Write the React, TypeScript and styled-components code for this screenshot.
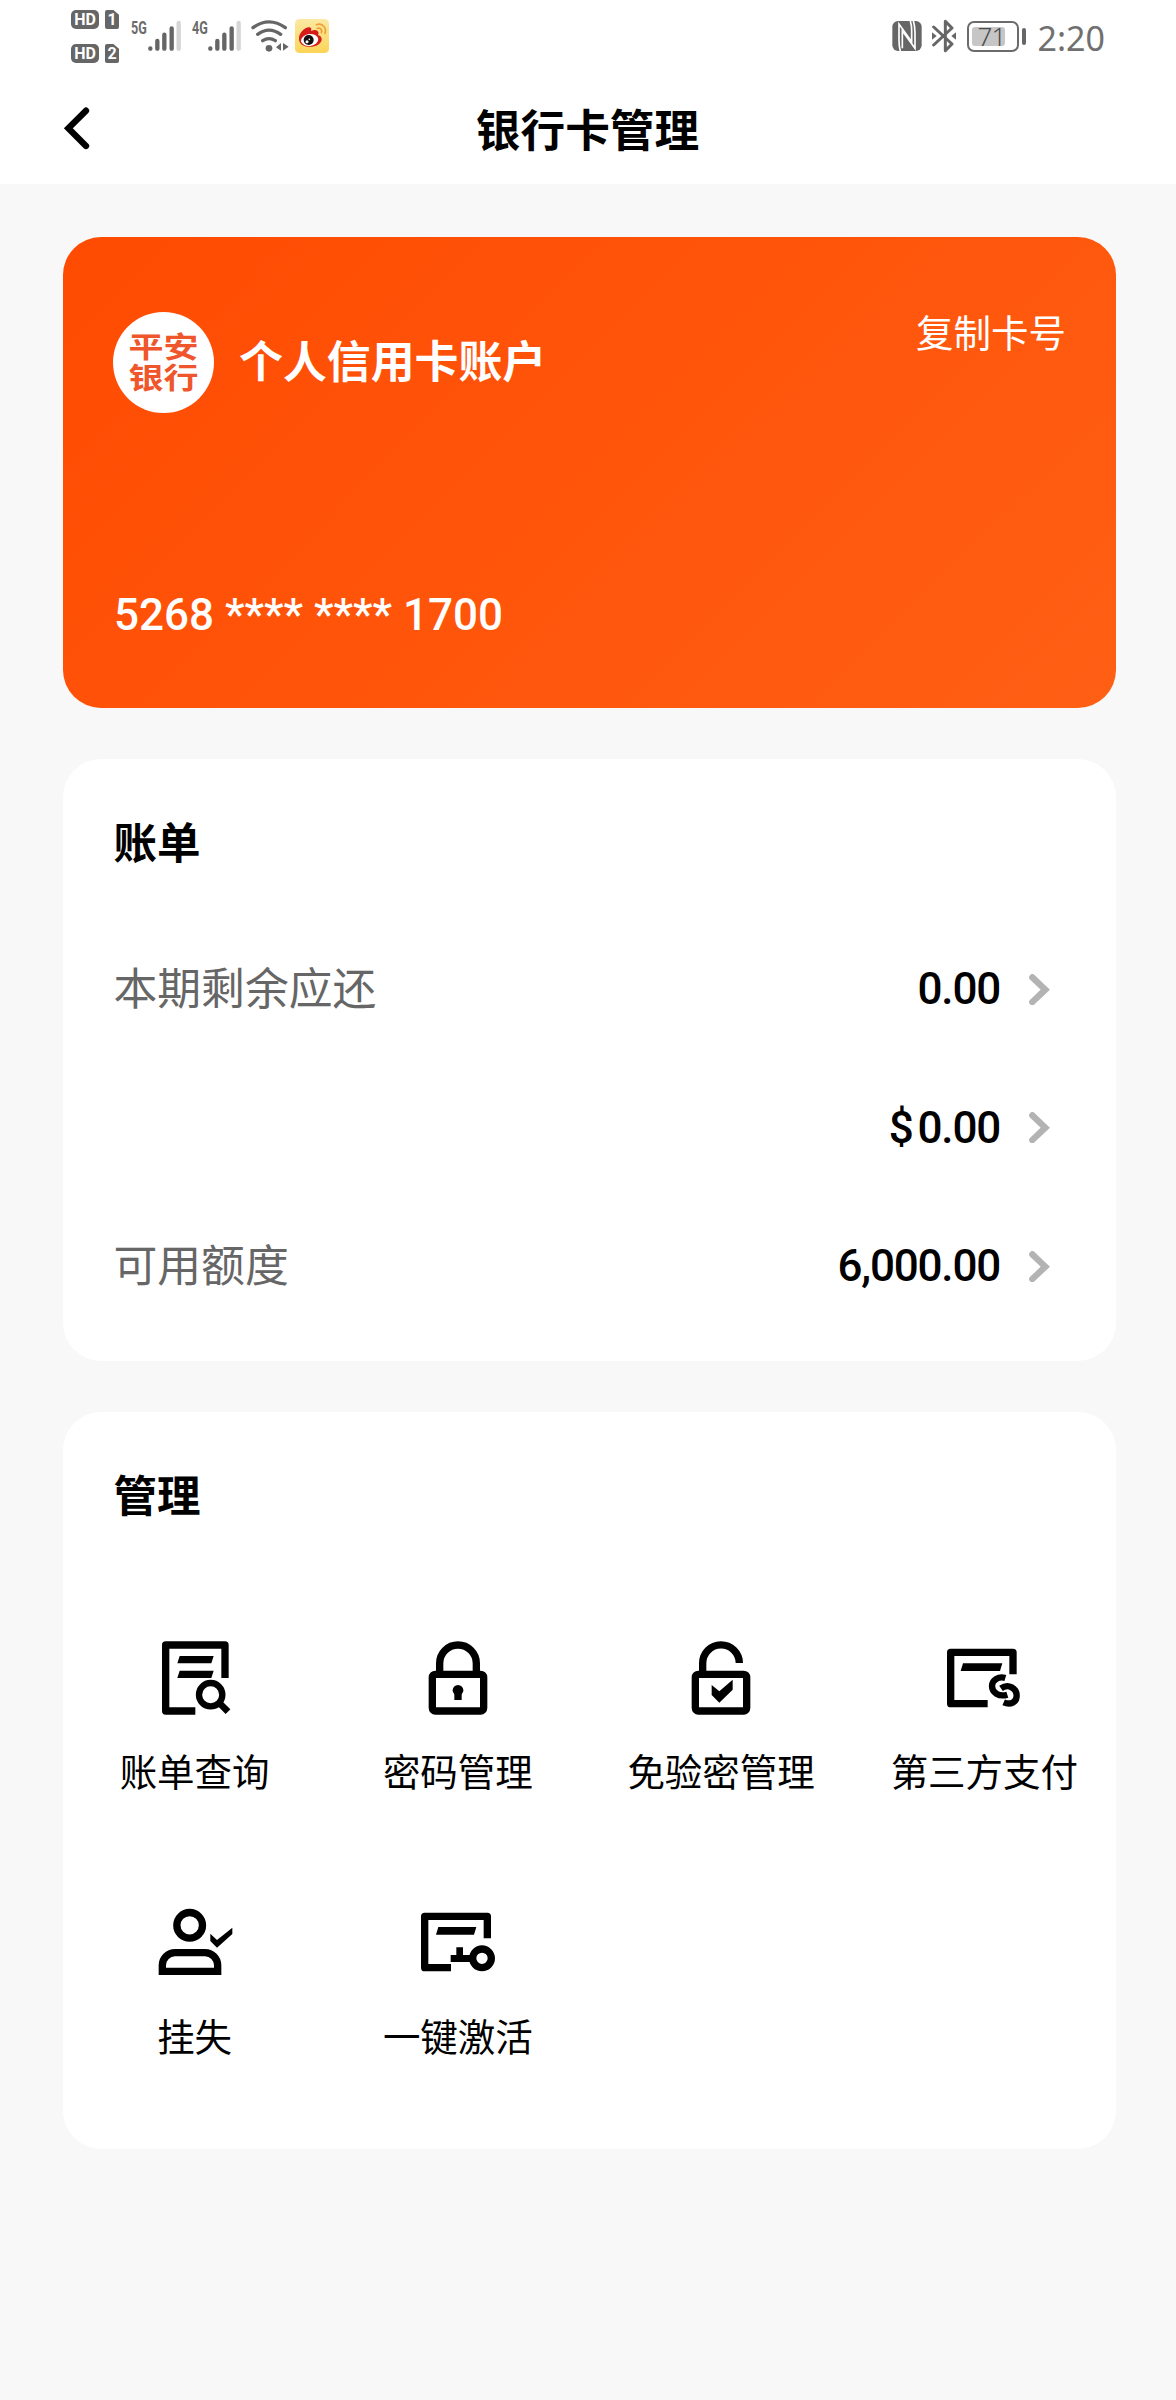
import React from "react";
import styled, { createGlobalStyle } from "styled-components";

const GlobalStyle = createGlobalStyle`
  * { box-sizing: border-box; }
  body {
    margin: 0;
    background: #f8f8f8;
    font-family: Roboto, "Noto Sans CJK SC", sans-serif;
    color: #000;
  }
  svg { display: block; }
`;

const Page = styled.div`
  width: 1176px;
  height: 2400px;
  background: #f8f8f8;
  overflow: hidden;
`;

const Top = styled.header`
  height: 184px;
  background: #fff;
`;

const StatusBar = styled.div`
  display: flex;
  align-items: flex-start;
  justify-content: space-between;
  height: 76px;
  padding: 0 71px;
`;

const StatusGroup = styled.div`
  display: flex;
  align-items: flex-start;
`;

const Glyph = styled.svg<{ $ml?: number; $mt: number }>`
  flex: none;
  margin-left: ${(p) => p.$ml ?? 0}px;
  margin-top: ${(p) => p.$mt}px;
`;

const Badges = styled.div`
  display: grid;
  grid-template-columns: 28px 14px;
  gap: 15px 6px;
  margin-top: 10px;
`;

const Badge = styled.span<{ $sim?: boolean }>`
  height: 19px;
  border-radius: ${(p) => (p.$sim ? "2px" : "5px")};
  background: #666;
  color: #fff;
  font: 700 16px/20px Roboto, sans-serif;
  text-align: center;
  ${(p) => p.$sim && "clip-path: polygon(0 0, 60% 0, 100% 25%, 100% 100%, 0 100%);"}
`;

const NetLabel = styled.span<{ $ml: number }>`
  width: 17px;
  margin: 20px 0 0 ${(p) => p.$ml}px;
  font: 700 18px/16px Roboto, sans-serif;
  color: #6b6b6b;
  transform: scaleX(0.7);
  transform-origin: left;
`;

const Battery = styled.div`
  display: flex;
  align-items: center;
  margin: 21px 0 0 11px;
  &::after {
    content: "";
    width: 4px;
    height: 17px;
    margin-left: 3px;
    border-radius: 2px;
    background: #666;
  }
`;

const BatteryBody = styled.div`
  width: 52px;
  height: 31px;
  padding: 4px 3px;
  border: 2.5px solid #6b6b6b;
  border-radius: 7px;
`;

const BatteryFill = styled.div`
  width: 33px;
  height: 19px;
  padding-left: 6px;
  border-radius: 3px;
  background: #c6c6c6;
  color: #4c4c4c;
  font: 300 26px/19px "Noto Sans", sans-serif;
  letter-spacing: -1px;
  white-space: nowrap;
`;

const Clock = styled.span`
  margin-left: 12px;
  margin-top: 14px;
  font: 400 34px/48px "Noto Sans", sans-serif;
  color: #707070;
`;

const NavBar = styled.div`
  display: grid;
  grid-template-columns: 63px 1fr 63px;
  align-items: center;
  height: 108px;
`;

const BackButton = styled.button`
  padding: 0 0 4px 63px;
  border: 0;
  background: none;
`;

const PageTitle = styled.h1`
  margin: 0;
  padding: 5px 1px 0 0;
  text-align: center;
  font-size: 44.7px;
  line-height: 103px;
  font-weight: 700;
`;

const Content = styled.main`
  display: flex;
  flex-direction: column;
  gap: 51px;
  padding: 53px 60px 0 63px;
`;

const BankCard = styled.section`
  display: flex;
  flex-direction: column;
  justify-content: space-between;
  height: 471px;
  padding: 75px 50px 63px;
  border-radius: 38px;
  background: linear-gradient(135deg, #ff4b02 0%, #ff5f14 100%);
  color: #fff;
`;

const CardHead = styled.div`
  display: flex;
  align-items: flex-start;
`;

const BankLogo = styled.div`
  display: flex;
  align-items: center;
  justify-content: center;
  width: 101px;
  height: 101px;
  border-radius: 50%;
  background: #fff;
`;

const LogoText = styled.span`
  width: 72px;
  padding-top: 3px;
  font-size: 35px;
  line-height: 37px;
  font-weight: 700;
  text-align: center;
  color: #f0562c;
  transform: scaleY(0.83);
`;

const AccountName = styled.h2`
  margin: 0 auto 0 25px;
  font-size: 43.9px;
  line-height: 102px;
  font-weight: 700;
`;

const CopyButton = styled.button`
  padding: 1px 0 0 0;
  border: 0;
  background: none;
  color: #fff;
  font: inherit;
  font-size: 37.5px;
  line-height: 42px;
`;

const CardNumber = styled.div`
  padding-left: 1px;
  font-size: 44px;
  line-height: 60px;
  font-weight: 500;
`;

const Panel = styled.section<{ $height: number }>`
  height: ${(p) => p.$height}px;
  border-radius: 38px;
  background: #fff;
`;

const PanelTitle = styled.h2`
  height: 161px;
  margin: 0;
  padding-left: 50.5px;
  font-size: 43.5px;
  line-height: 171px;
  font-weight: 700;
`;

const BillRow = styled.div`
  display: flex;
  align-items: center;
  height: 138.5px;
  padding: 0 66px 0 50.5px;
`;

const BillLabel = styled.span`
  flex: 1;
  padding-bottom: 6px;
  font-size: 43.8px;
  color: #666;
`;

const Amount = styled.span`
  margin-right: 29px;
  font-size: 44px;
  line-height: 60px;
  font-weight: 500;
  letter-spacing: -1.2px;
`;

const Currency = styled.span`
  margin-right: 5px;
`;

const ActionGrid = styled.div`
  display: grid;
  grid-template-columns: repeat(4, 1fr);
  grid-auto-rows: 265px;
`;

const Action = styled.button`
  display: flex;
  flex-direction: column;
  align-items: center;
  padding: 61px 0 0;
  border: 0;
  background: none;
  color: #000;
  font: inherit;
  font-size: 37.5px;
  line-height: 56px;
  white-space: nowrap;
`;

const ActionIcon = styled.svg`
  width: 88px;
  height: 88px;
  margin-bottom: 23px;
`;

const line = { fill: "none", stroke: "#000", strokeWidth: 22 } as const;

const StatementIcon = () => (
  <>
    <path d="M222 132V33H44V231H133" {...line} strokeLinejoin="round" />
    <path d="M86 66H188L181 88H79ZM86 110H188L181 132H79Z" />
    <circle cx="179" cy="182" r="35" {...line} strokeWidth={19} />
    <path d="M205 207L231 233" {...line} strokeWidth={20} />
  </>
);

const LockBody = () => (
  <path
    fillRule="evenodd"
    d="M64 110H200A20 20 0 0 1 220 130V222A20 20 0 0 1 200 242H64A20 20 0 0 1 44 222V130A20 20 0 0 1 64 110ZM66 132V220H198V132Z"
  />
);

const PasswordIcon = () => (
  <>
    <LockBody />
    <path d="M77 121V88A55 55 0 0 1 187 88V121" {...line} />
    <circle cx="132" cy="169" r="16" />
    <path d="M121 175H143V198H121Z" />
  </>
);

const UnlockIcon = () => (
  <>
    <LockBody />
    <path d="M77 121V88A55 55 0 0 1 187 87" {...line} />
    <path d="M104 153L127 172L167 137V167L127 206L104 183Z" />
  </>
);

const ThirdPartyIcon = () => (
  <>
    <path d="M219 121V55H32V209H143" {...line} strokeLinejoin="round" />
    <path d="M69 88H187L180 111H62Z" />
    <path
      d="M196 132C176 126 156 138 156 156C156 175 176 190 202 182M183 163C206 147 230 164 230 185C230 205 212 214 191 205"
      {...line}
      strokeWidth={19}
    />
  </>
);

const LossIcon = () => (
  <>
    <circle cx="116" cy="79" r="38.5" {...line} />
    <path d="M34 217V199A38 38 0 0 1 72 161H162A38 38 0 0 1 200 199V217Z" {...line} />
    <path d="M178 104L198 123L244 86V105L198 146L178 126Z" />
  </>
);

const ActivateIcon = () => (
  <>
    <path d="M220 118V52H32V206H111" {...line} strokeLinejoin="round" />
    <path d="M73 84H187L180 107H66Z" />
    <circle cx="204" cy="178" r="28" {...line} />
    <path d="M110 168H127V145H147V168H170V189H110Z" />
  </>
);

const Signal = ({ ml }: { ml: number }) => (
  <Glyph $ml={ml} $mt={20} width="33" height="32" viewBox="0 0 99 96" fill="none" stroke="#666" strokeWidth="13" strokeLinecap="round">
    <path d="M7 85V86M28 63V86M49 44V86M71 25V86" />
    <path d="M92 9V86" stroke="#d5d5d5" />
  </Glyph>
);

const RowArrow = () => (
  <svg width="21" height="31" viewBox="0 0 63 93" fill="none" stroke="#b3b3b3" strokeWidth="19" strokeLinecap="round">
    <path d="M10 10L49 47L10 84" />
  </svg>
);

const bills = [
  { label: "本期剩余应还", currency: "", value: "0.00" },
  { label: "", currency: "$", value: "0.00" },
  { label: "可用额度", currency: "", value: "6,000.00" },
];

const actions = [
  { label: "账单查询", Icon: StatementIcon },
  { label: "密码管理", Icon: PasswordIcon },
  { label: "免验密管理", Icon: UnlockIcon },
  { label: "第三方支付", Icon: ThirdPartyIcon },
  { label: "挂失", Icon: LossIcon },
  { label: "一键激活", Icon: ActivateIcon },
];

export default function App() {
  return (
    <Page>
      <GlobalStyle />
      <Top>
        <StatusBar>
          <StatusGroup>
            <Badges>
              <Badge>HD</Badge>
              <Badge $sim>1</Badge>
              <Badge>HD</Badge>
              <Badge $sim>2</Badge>
            </Badges>
            <NetLabel $ml={12}>5G</NetLabel>
            <Signal ml={0} />
            <NetLabel $ml={11}>4G</NetLabel>
            <Signal ml={-1} />
            <Glyph $ml={10} $mt={20} width="38" height="32" viewBox="0 0 114 96" fill="none" stroke="#666" strokeWidth="10" strokeLinecap="round">
              <path d="M6 23Q54 -12 103 23M20 43Q54 18 89 43M35 62Q54 50 73 62" />
              <circle cx="54" cy="85" r="10" fill="#666" stroke="none" />
              <path d="M90 69V92L75 82ZM96 69V92L113 80Z" fill="#666" stroke="none" />
            </Glyph>
            <Glyph $ml={6} $mt={19} width="34" height="34" viewBox="0 0 102 102">
              <defs>
                <linearGradient id="tile" x2="0" y2="1">
                  <stop stopColor="#fbe9a4" />
                  <stop offset="1" stopColor="#fbd557" />
                </linearGradient>
              </defs>
              <rect width="102" height="102" rx="13" fill="url(#tile)" />
              <path d="M12 59C11 42 30 23 44 25Q51 27 48 36Q65 29 70 39Q72 43 69 48Q81 51 80 63C77 77 59 85 40 83C23 82 12 73 12 59Z" fill="#d51c1b" />
              <ellipse cx="44" cy="63" rx="26" ry="18" fill="#fff" transform="rotate(-8 44 63)" />
              <circle cx="41" cy="63" r="15" fill="#151010" />
              <circle cx="36" cy="68" r="4.5" fill="#fff" />
              <circle cx="43" cy="61" r="2.5" fill="#fff" />
              <path d="M64 17C82 11 96 27 90 43M67 28C76 25 83 33 79 41" fill="none" stroke="#ef9e35" strokeWidth="5" strokeLinecap="round" />
            </Glyph>
          </StatusGroup>
          <StatusGroup>
            <Glyph $mt={21} width="30" height="30" viewBox="0 0 90 90">
              <rect x="1" width="88" height="90" rx="17" fill="#666" />
              <path d="M25 90Q21 76 21 58V9L59 62V30Q59 12 55 0M31 82V29L69 82V36Q69 14 64 0" fill="none" stroke="#fff" strokeWidth="5" />
            </Glyph>
            <Glyph $ml={10} $mt={19} width="24" height="34" viewBox="0 0 72 102" fill="none" stroke="#666" strokeWidth="9" strokeLinejoin="round" strokeLinecap="round">
              <path d="M5 24L60 75L40 95V7L60 27L5 78" />
              <path d="M0 40V62L14 51ZM72 40V62L58 51Z" fill="#666" stroke="none" />
            </Glyph>
            <Battery>
              <BatteryBody>
                <BatteryFill>71</BatteryFill>
              </BatteryBody>
            </Battery>
            <Clock>2:20</Clock>
          </StatusGroup>
        </StatusBar>
        <NavBar>
          <BackButton aria-label="返回">
            <svg width="27" height="43" viewBox="0 0 81 129" fill="none" stroke="#000" strokeWidth="19" strokeLinecap="round">
              <path d="M69 11L16 64L69 117" />
            </svg>
          </BackButton>
          <PageTitle>银行卡管理</PageTitle>
        </NavBar>
      </Top>
      <Content>
        <BankCard>
          <CardHead>
            <BankLogo>
              <LogoText>平安银行</LogoText>
            </BankLogo>
            <AccountName>个人信用卡账户</AccountName>
            <CopyButton>复制卡号</CopyButton>
          </CardHead>
          <CardNumber>5268 **** **** 1700</CardNumber>
        </BankCard>
        <Panel $height={602}>
          <PanelTitle>账单</PanelTitle>
          {bills.map((bill, i) => (
            <BillRow key={i}>
              <BillLabel>{bill.label}</BillLabel>
              <Amount>
                {bill.currency && <Currency>{bill.currency}</Currency>}
                {bill.value}
              </Amount>
              <RowArrow />
            </BillRow>
          ))}
        </Panel>
        <Panel $height={737}>
          <PanelTitle>管理</PanelTitle>
          <ActionGrid>
            {actions.map(({ label, Icon }) => (
              <Action key={label}>
                <ActionIcon viewBox="0 0 264 264">
                  <Icon />
                </ActionIcon>
                {label}
              </Action>
            ))}
          </ActionGrid>
        </Panel>
      </Content>
    </Page>
  );
}
